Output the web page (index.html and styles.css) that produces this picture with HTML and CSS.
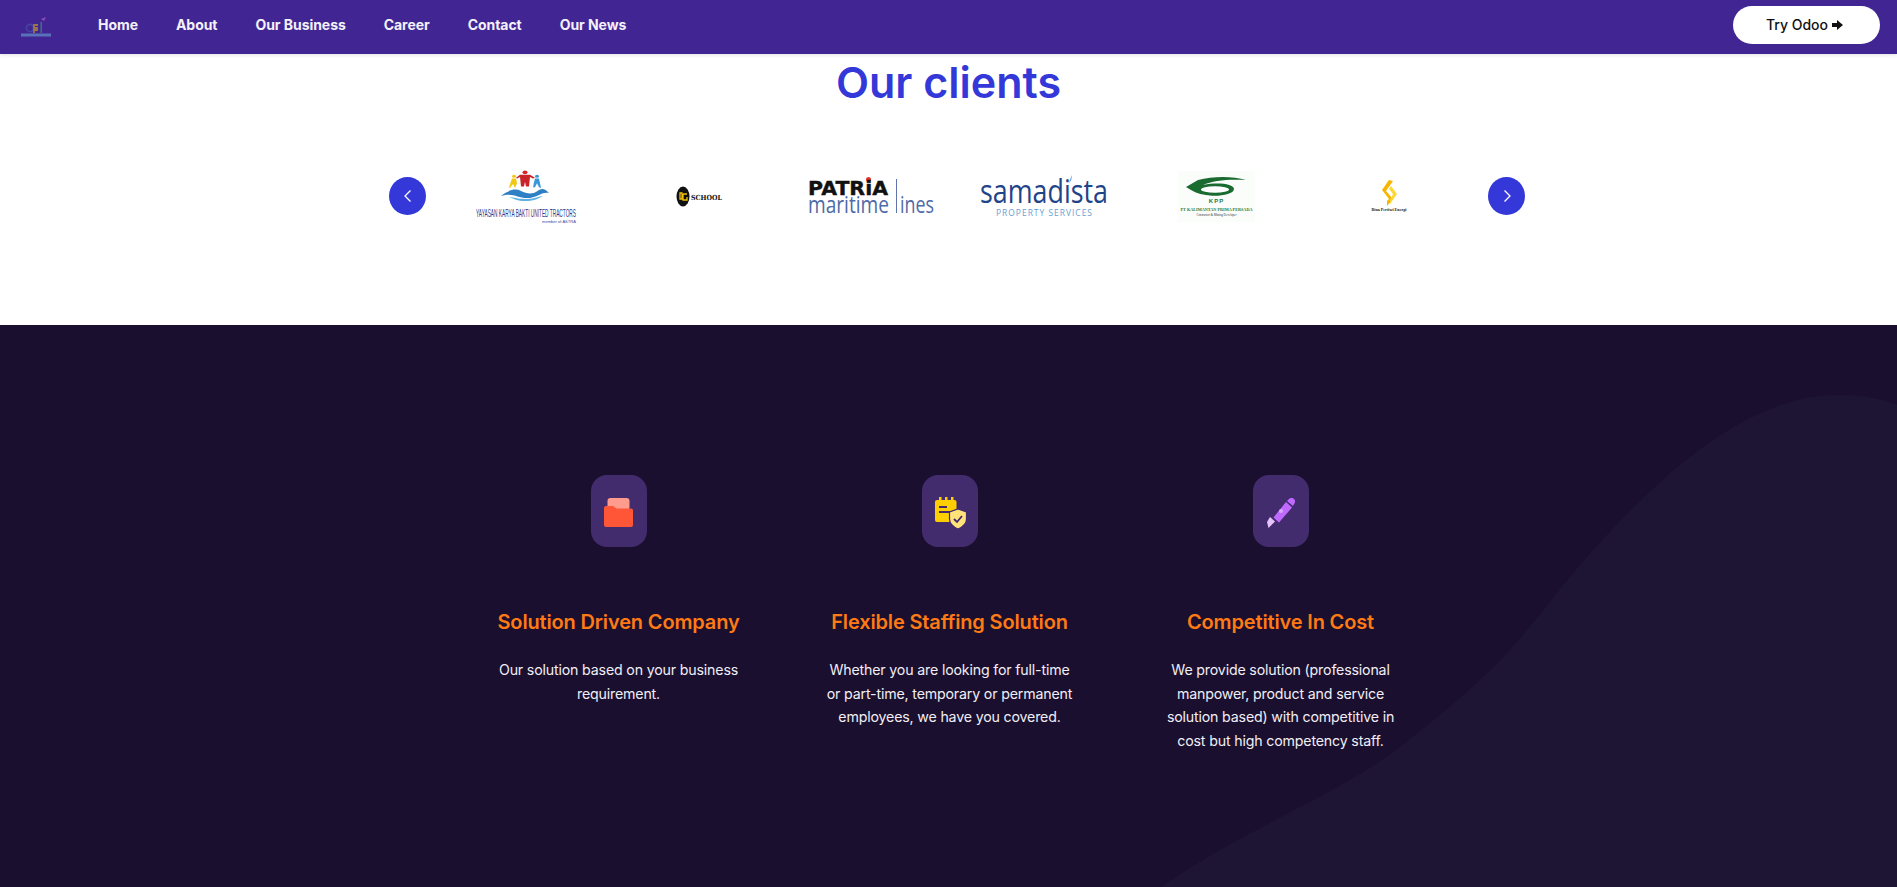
FILE: index.html
```html
<!DOCTYPE html>
<html lang="en">
<head>
<meta charset="utf-8">
<title>Our clients</title>
<link rel="stylesheet" href="styles.css">
</head>
<body>
<header class="topbar">
  <a class="brand" href="#">
    <svg width="32" height="24" viewBox="0 0 32 24">
      <circle cx="10" cy="15" r="3.600" fill="none" stroke="#4a4aa8" stroke-width="1.600"/>
      <path d="M18 12h-4v3h3v2h-3v3" fill="none" stroke="#a8853e" stroke-width="1.800"/>
      <rect x="20.500" y="9" width="1.400" height="11" fill="#3f8a6a"/>
      <path d="M21 6l5-2-2 4z" fill="#a050c0"/>
      <rect x="1" y="20.500" width="30" height="3" fill="#5f7fc0"/>
    </svg>
  </a>
  <nav class="nav">
    <a href="#">Home</a>
    <a href="#">About</a>
    <a href="#">Our Business</a>
    <a href="#">Career</a>
    <a href="#">Contact</a>
    <a href="#">Our News</a>
  </nav>
  <a class="try" href="#">Try Odoo <svg class="try-arrow" width="11" height="10" viewBox="0 0 11 10"><path d="M0 3h5V0l6 5-6 5V7H0z" fill="#111"/></svg></a>
</header>

<section class="clients">
  <h1>Our clients</h1>
  <div class="carousel">
    <button class="arrow" aria-label="Previous"><svg width="10" height="14" viewBox="0 0 10 14"><path d="M7.500 1.500L2 7l5.500 5.500" fill="none" stroke="#fff" stroke-width="1.300"/></svg></button>
    <div class="logos">
      <div class="logo">
        <svg width="102" height="53" viewBox="0 0 102 53">
          <g transform="translate(1 0) scale(1 .78)">
            <circle cx="48" cy="3" r="2.500" fill="#d8262c"/><path d="M43 6h10l5 4-2 1-3-2-1 12h-3l-1-6-1 6h-3l-1-12-3 2-1-1z" fill="#c8252b"/>
            <circle cx="37" cy="8" r="2" fill="#f2c811"/><path d="M35 11h4l1 6-2 6-2-5-3 5-1-1z" fill="#f2c811"/>
            <circle cx="60" cy="8" r="2" fill="#3a98d8"/><path d="M58 11h4l2 12-2-1-2-5-2 5-2 0 1-6z" fill="#3a98d8"/>
          </g>
          <path d="M25 26c8-6 14-8 20-5s12 4 18-1c4-2 6-1 10 3-7-2-12 5-22 5s-14-6-26-2z" fill="#2f7fc4"/>
          <path d="M33 27c8 1 10 2 18 2s12-3 16-3c-5 3-10 5-18 5s-10-2-16-4z" fill="#5fb0e0"/>
          <text x="0" y="47" class="lt1" textLength="100" lengthAdjust="spacingAndGlyphs">YAYASAN KARYA BAKTI UNITED TRACTORS</text>
          <text x="66" y="52.500" class="lt2" textLength="34" lengthAdjust="spacingAndGlyphs">member of ASTRA</text>
        </svg>
      </div>
      <div class="logo">
        <svg width="47" height="21" viewBox="0 0 47 21">
          <ellipse cx="7" cy="10.500" rx="6.500" ry="10" fill="#111"/>
          <path d="M4 7v6h2V7zM7 8h4M7 8v6h4v-3" fill="none" stroke="#f4c20d" stroke-width="1.300"/>
          <text x="15" y="13.500" class="lt3" textLength="31" lengthAdjust="spacingAndGlyphs">SCHOOL</text>
        </svg>
      </div>
      <div class="logo">
        <svg width="127" height="38" viewBox="0 0 127 38">
          <circle cx="60.500" cy="2.500" r="2.500" fill="#e8342c"/>
          <text x="0" y="18" class="lt4" textLength="80" lengthAdjust="spacingAndGlyphs">PATRiA</text>
          <rect x="88" y="2" width="1" height="34" fill="#5f74ac"/>
          <text x="0" y="36" class="lt5" textLength="81" lengthAdjust="spacingAndGlyphs">maritime</text>
          <text x="92" y="36" class="lt5" textLength="34" lengthAdjust="spacingAndGlyphs">ines</text>
        </svg>
      </div>
      <div class="logo">
        <svg width="128" height="42" viewBox="0 0 128 42">
          <text x="0" y="28" class="lt6" textLength="128" lengthAdjust="spacingAndGlyphs">samadista</text>
          <path d="M89 8c1-3 2-6 2.500-8 .5 3 0 6-2.500 8z" fill="#5f9fd8"/>
          <text x="16" y="41" class="lt7" textLength="97" lengthAdjust="spacingAndGlyphs">PROPERTY SERVICES</text>
        </svg>
      </div>
      <div class="logo">
        <svg class="kpp" width="77" height="51" viewBox="0 0 77 51">
          <path d="M8 16L20 9C35 5 55 5 68 9 52 8 35 9 25 14 40 11 56 13 56 18 56 24 38 26 28 24 20 23 14 20 8 16z" fill="#1a6b30"/>
          <ellipse cx="37" cy="18.500" rx="14" ry="3.200" fill="#fff"/>
          <text x="38.500" y="31.500" class="lt8" text-anchor="middle">KPP</text>
          <text x="38.500" y="40" class="lt9" text-anchor="middle" textLength="72" lengthAdjust="spacingAndGlyphs">PT KALIMANTAN PRIMA PERSADA</text>
          <text x="38.500" y="45" class="lt10" text-anchor="middle" textLength="40" lengthAdjust="spacingAndGlyphs">Contractor &amp; Mining Developer</text>
        </svg>
      </div>
      <div class="logo">
        <svg width="36" height="32" viewBox="0 0 36 32">
          <path d="M18 0l4 1-7 10 7 8-6 7 0-5 2-2-7-9z" fill="#f7b500"/>
          <path d="M20 6l6 8-7 10 0-4 3-6-4-5z" fill="#fdd835"/>
          <text x="18" y="31" class="lt11" text-anchor="middle" textLength="35" lengthAdjust="spacingAndGlyphs">Bina Pertiwi Energi</text>
        </svg>
      </div>
    </div>
    <button class="arrow" aria-label="Next"><svg width="10" height="14" viewBox="0 0 10 14"><path d="M2.500 1.500L8 7l-5.500 5.500" fill="none" stroke="#fff" stroke-width="1.300"/></svg></button>
  </div>
</section>

<section class="values">
  <svg class="wave" viewBox="0 325 1897 562" width="1897" height="562" aria-hidden="true">
    <path d="M1161 887C1250 825 1340 795 1405 743C1445 711 1477 685 1507 653C1532 626 1553 597 1578 567C1604 537 1630 510 1659 483C1720 428 1780 395 1837 395C1860 395 1880 398 1897 405V887Z" fill="#1e1433"/>
  </svg>
  <div class="cards">
    <article class="card">
      <div class="tile">
        <svg width="30" height="30" viewBox="0 0 30 30">
          <rect x="3.500" y="0" width="22" height="12" rx="3" fill="#ff9c8e"/>
          <path d="M0 10a2 2 0 0 1 2-2h7l3.500 2.500H27a2 2 0 0 1 2 2V27a2 2 0 0 1-2 2H2a2 2 0 0 1-2-2z" fill="#ff5638"/>
        </svg>
      </div>
      <h2>Solution Driven Company</h2>
      <p>Our solution based on your business<br>requirement.</p>
    </article>
    <article class="card">
      <div class="tile shift">
        <svg width="32" height="32" viewBox="0 0 32 32">
          <path d="M2 3h2V0h2.500v3h3.500V0h2.500v3h3.500V0h2.500v3h1a2 2 0 0 1 2 2v8l-6 2v10H2a2 2 0 0 1-2-2V5a2 2 0 0 1 2-2z" fill="#ffce00"/>
          <rect x="4" y="9" width="8" height="2" fill="#42296e"/><rect x="4" y="14" width="11" height="2" fill="#42296e"/>
          <path d="M23 12l8.500 3v7c0 5-4 8-8.500 10-4.500-2-8.500-5-8.500-10v-7z" fill="#ffe27a" stroke="#42296e" stroke-width="1.200"/>
          <path d="M19 22l3 3 5-6" fill="none" stroke="#42296e" stroke-width="1.800"/>
        </svg>
      </div>
      <h2>Flexible Staffing Solution</h2>
      <p>Whether you are looking for full-time<br>or part-time, temporary or permanent<br>employees, we have you covered.</p>
    </article>
    <article class="card">
      <div class="tile">
        <svg width="28" height="30" viewBox="0 0 28 30">
          <path d="M20 3l2-2a3 3 0 0 1 5 5l-1 2z" fill="#c069ff"/>
          <path d="M19 4l6 5.500L12 24.500 6.500 19.500z" fill="#c069ff"/>
          <circle cx="14" cy="13" r="2" fill="#dca8ff"/>
          <path d="M3 19l5 4.500L1.500 30 0 24z" fill="#e4c4fa"/>
        </svg>
      </div>
      <h2>Competitive In Cost</h2>
      <p>We provide solution (professional<br>manpower, product and service<br>solution based) with competitive in<br>cost but high competency staff.</p>
    </article>
  </div>
</section>
</body>
</html>
```

FILE: styles.css
```css
* { box-sizing: border-box; }
html, body { margin: 0; padding: 0; }
body {
  width: 1897px;
  height: 887px;
  overflow: hidden;
  background: #fff;
  font-family: "Inter", "Liberation Sans", sans-serif;
}

.topbar {
  position: relative;
  z-index: 2;
  height: 54px;
  display: flex;
  align-items: center;
  padding: 0 17px 5px 20px;
  background: #412693;
  box-shadow: 0 1px 4px rgba(0, 0, 0, .12);
}
.brand { display: block; width: 32px; height: 24px; margin-right: 46px; opacity: .85; }
.nav { display: flex; gap: 38px; }
.nav a {
  color: #f4f1fb;
  text-decoration: none;
  font-size: 14px;
  font-weight: 700;
  letter-spacing: -.05px;
}
.try {
  margin-left: auto;
  width: 147px;
  height: 38px;
  padding-right: 4px;
  border-radius: 19px;
  background: #fff;
  color: #111;
  display: flex;
  align-items: center;
  justify-content: center;
  gap: 4px;
  font-size: 14px;
  font-weight: 500;
  text-decoration: none;
}

.clients { height: 271px; }
.clients h1 {
  margin: 0;
  text-align: center;
  font-size: 43px;
  line-height: 56px;
  font-weight: 600;
  color: #3538d8;
}
.carousel {
  display: flex;
  align-items: center;
  width: 1136px;
  margin: 56px 0 0 389px;
}
.arrow {
  flex: none;
  width: 37px;
  height: 38px;
  padding: 0;
  border: 0;
  border-radius: 50%;
  background: #3538d8;
  display: flex;
  align-items: center;
  justify-content: center;
}
.logos { flex: 1; display: flex; padding: 0 13px 0 15px; }
.logo { flex: 1; height: 60px; display: flex; align-items: center; justify-content: center; }
.logo svg { display: block; overflow: visible; }
.kpp { background: #fbfdfb; }

.lt1 { font: 400 11.500px "Liberation Sans", sans-serif; fill: #2a3a8c; }
.lt2 { font: 400 3.500px "Liberation Sans", sans-serif; fill: #3a4a9c; }
.lt3 { font: 700 7px "DejaVu Serif", serif; fill: #111; }
.lt4 { font: 700 20px "DejaVu Sans", sans-serif; fill: #111; stroke: #111; stroke-width: .4px; }
.lt5 { font: 400 24px "Open Sans", sans-serif; fill: #4e6aa8; }
.lt6 { font: 400 33px "Open Sans", sans-serif; fill: #1f4488; }
.lt7 { font: 400 8.500px "Open Sans", sans-serif; fill: #6a9ed4; letter-spacing: 1px; }
.lt8 { font: 700 6px "Liberation Sans", sans-serif; fill: #1f7a3a; letter-spacing: 1px; }
.lt9 { font: 700 5px "Liberation Serif", serif; fill: #1f7a3a; }
.lt10 { font: 400 3px "Liberation Serif", serif; fill: #333; }
.lt11 { font: 700 4px "Liberation Serif", serif; fill: #222; }

.values {
  position: relative;
  height: 562px;
  background: #1a0f2e;
  overflow: hidden;
}
.wave { position: absolute; left: 0; top: 0; display: block; }
.cards {
  position: relative;
  display: grid;
  grid-template-columns: repeat(3, 331px);
  justify-content: center;
  padding: 150px 0 0 2px;
}
.card { text-align: center; display: flex; flex-direction: column; align-items: center; }
.tile {
  width: 56px;
  height: 72px;
  border-radius: 16px;
  background: #432c6e;
  display: flex;
  align-items: center;
  justify-content: center;
}
.tile svg { margin-top: 4px; }
.tile.shift svg { margin-left: 3px; }
.card h2 {
  margin: 62px 0 0;
  font-size: 20px;
  line-height: 26px;
  font-weight: 600;
  letter-spacing: -.15px;
  color: #ff7a14;
}
.card p {
  margin: 23px 0 0;
  font-size: 14.200px;
  line-height: 23.700px;
  letter-spacing: -.17px;
  color: #f1eef6;
}
```
